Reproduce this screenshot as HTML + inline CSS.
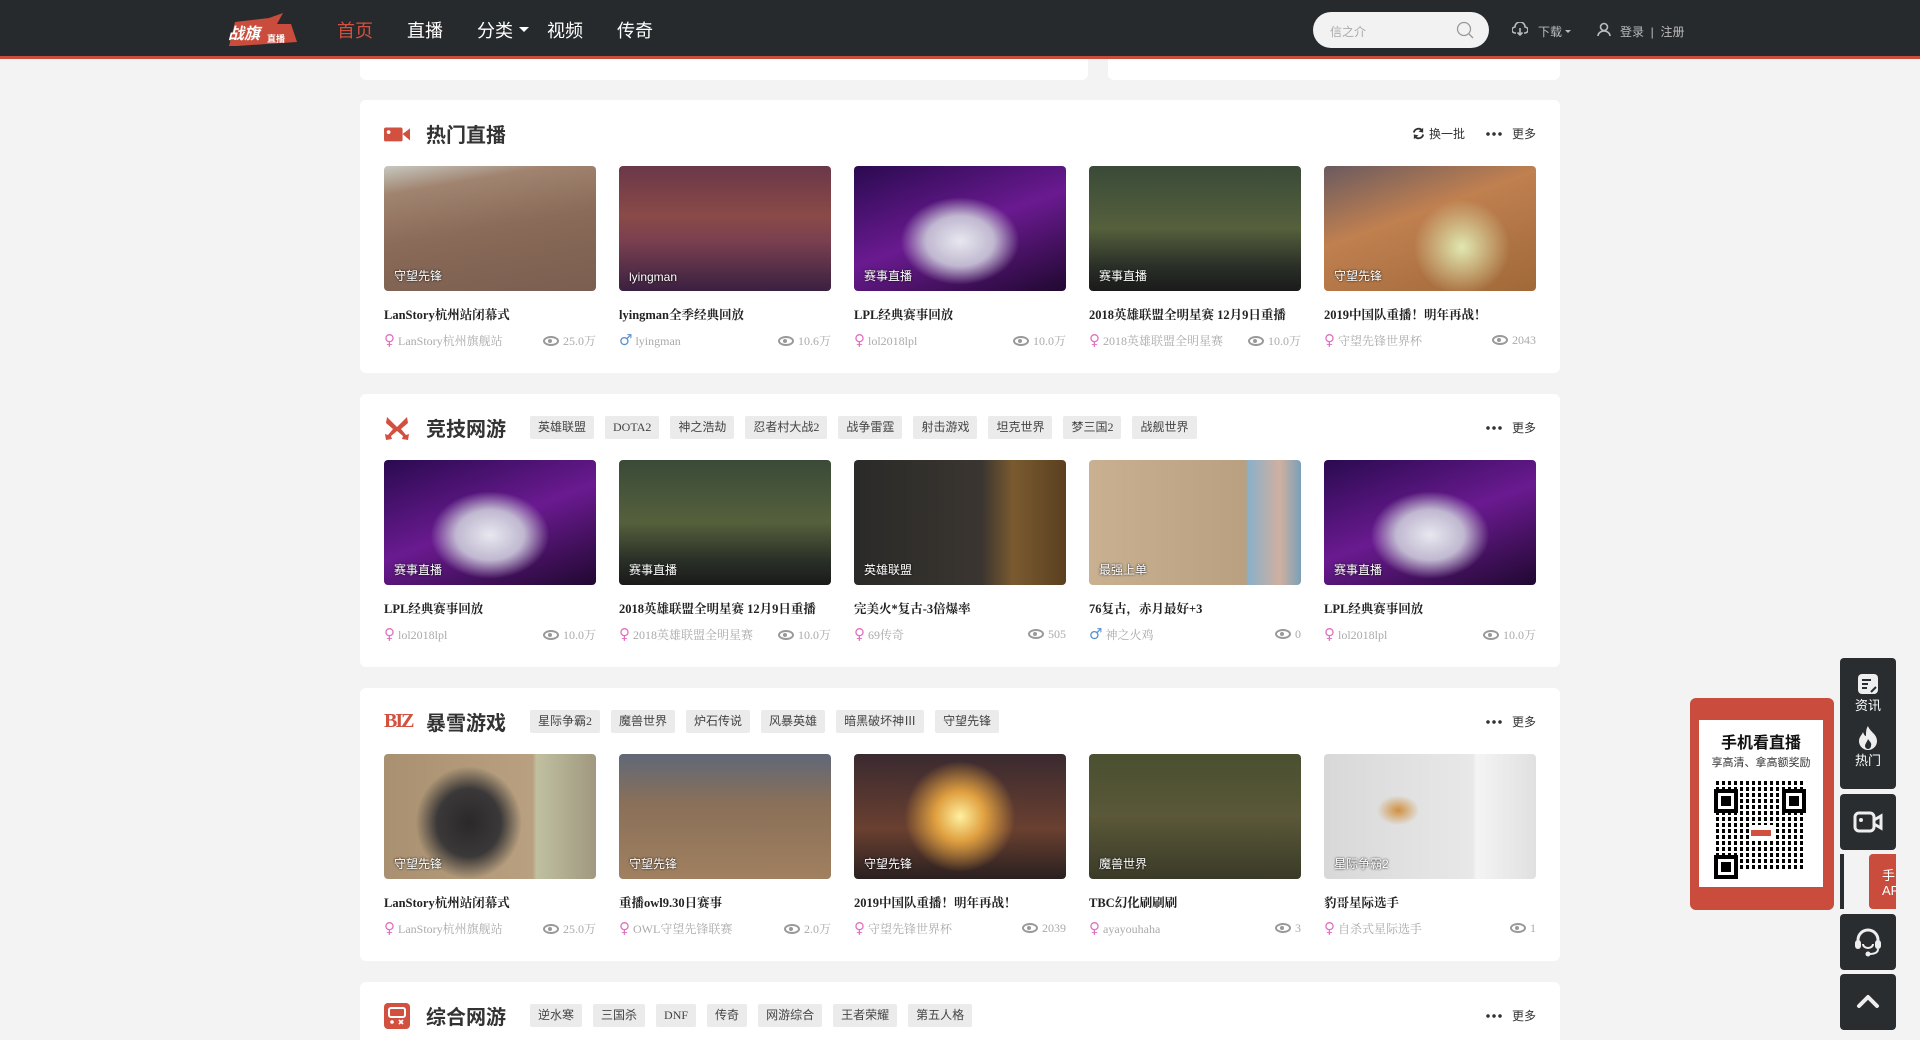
<!DOCTYPE html>
<html style="width:1920px;height:1040px;overflow:hidden"><head><meta charset="utf-8">
<style>
*{margin:0;padding:0;box-sizing:border-box}
body{width:1920px;height:1040px;overflow:hidden;background:#f3f3f3;font-family:"Liberation Sans","Noto Sans CJK SC",sans-serif;position:relative}
.hdr{position:absolute;left:0;top:0;width:1920px;height:59px;background:#272a2d;border-bottom:3px solid #c94c3d}
.nav{position:absolute;top:17px;font-size:18px;color:#fff}
.logo{position:absolute;left:225px;top:12px;width:72px;height:36px}
.search{position:absolute;left:1313px;top:12px;width:176px;height:36px;border-radius:18px;background:#f2f2f2;font-size:12px;color:#aaa;padding:11px 0 0 17px}
.hr{position:absolute;top:23px;font-size:12px;color:#bbb}
.card{position:absolute;left:360px;width:1200px;height:273px;background:#fff;border-radius:6px}
.ttl{position:absolute;left:66px;top:19px;font-size:20px;font-weight:bold;color:#333}
.ico{position:absolute;left:24px;top:21px;width:26px;height:26px}
.tags{position:absolute;left:170px;top:22px;display:flex;gap:11px}
.tag{height:23px;line-height:23px;padding:0 8px;background:#ebebeb;border-radius:2px;font-size:12px;color:#444;font-family:"Liberation Serif","Noto Sans CJK SC",serif}
.more{position:absolute;right:24px;top:25px;font-size:12px;color:#333;display:flex;align-items:center}
.dots{display:inline-block;width:18px;height:4px;margin-right:9px;background:radial-gradient(circle,#333 1.6px,transparent 2px) 0 0/6px 4px repeat-x}
.items{position:absolute;left:24px;top:66px;display:flex;gap:23px}
.it{width:212px}
.th{width:212px;height:125px;border-radius:4px;position:relative;overflow:hidden}
.th span{position:absolute;left:10px;bottom:7px;color:#fff;font-size:12px;text-shadow:0 0 2px #000}
.it h4{margin-top:14px;font-size:12.5px;font-family:"Liberation Serif","Noto Serif CJK SC",serif;color:#222;font-weight:bold;white-space:nowrap;height:16px}
.meta{margin-top:10px;display:flex;justify-content:space-between;font-size:12px;color:#aaa;font-family:"Liberation Serif","Noto Serif CJK SC",serif;align-items:center}
.f,.m{font-size:15px;font-weight:bold;font-family:"DejaVu Sans",sans-serif;margin-right:3px}
.f{color:#e070c0}.m{color:#5a90d0}
.eye{display:inline-block;width:16px;height:10px;border:2px solid #999;border-radius:50%;vertical-align:-1px;margin-right:4px;position:relative}
.eye:after{content:"";position:absolute;left:3px;top:1px;width:4px;height:4px;border-radius:50%;background:#999}
.sb{position:absolute;left:1840px;width:56px;background:#2a2d30;border-radius:4px;color:#fff;font-size:13px;text-align:center}
</style></head><body>
<div class="hdr">
 <svg class="logo" viewBox="0 0 72 36"><polygon points="4,34 10,10 44,6 58,1 52,12 66,12 72,30 12,34" fill="#c94c3d"/><text x="3" y="27" font-size="16" font-weight="bold" font-style="italic" fill="#fff" font-family="Noto Sans CJK SC">战旗</text><text x="42" y="30" font-size="9" font-weight="bold" fill="#fff" font-family="Noto Sans CJK SC">直播</text></svg>
 <div class="nav" style="left:337px;color:#d2503f">首页</div>
 <div class="nav" style="left:407px">直播</div>
 <div class="nav" style="left:477px">分类</div>
 <div style="position:absolute;left:519px;top:27px;border:5px solid transparent;border-top:5px solid #fff"></div>
 <div class="nav" style="left:547px">视频</div>
 <div class="nav" style="left:617px">传奇</div>
 <div class="search">信之介<svg style="position:absolute;left:142px;top:8px" width="20" height="20" viewBox="0 0 20 20"><circle cx="9" cy="9" r="6.5" fill="none" stroke="#999" stroke-width="1.3"/><line x1="14" y1="14" x2="18" y2="18" stroke="#999" stroke-width="1.3"/></svg></div>
 <svg style="position:absolute;left:1512px;top:22px" width="16" height="14" viewBox="0 0 16 14"><path d="M4 11H3a3 3 0 0 1 0-6 5 5 0 0 1 10 0 3 3 0 0 1 0 6h-1" fill="none" stroke="#bbb" stroke-width="1.6"/><path d="M8 6v7M5.5 10.5 8 13l2.5-2.5" fill="none" stroke="#bbb" stroke-width="1.6"/></svg>
 <div class="hr" style="left:1538px">下载</div>
 <div style="position:absolute;left:1565px;top:30px;border:3px solid transparent;border-top:3px solid #bbb"></div>
 <svg style="position:absolute;left:1597px;top:22px" width="14" height="15" viewBox="0 0 14 15"><circle cx="7" cy="5" r="3.5" fill="none" stroke="#bbb" stroke-width="1.6"/><path d="M1 14a6 5 0 0 1 12 0" fill="none" stroke="#bbb" stroke-width="1.6"/></svg>
 <div class="hr" style="left:1620px">登录 &nbsp;| &nbsp;注册</div>
</div>
<div style="position:absolute;left:360px;top:59px;width:728px;height:21px;background:#fff;border-radius:0 0 6px 6px"></div>
<div style="position:absolute;left:1108px;top:59px;width:452px;height:21px;background:#fff;border-radius:0 0 6px 6px"></div>

<div class="card" style="top:100px">
 <svg class="ico" viewBox="0 0 28 26"><rect x="0" y="6" width="20" height="15" rx="2" fill="#d2503f"/><polygon points="20,13 28,7 28,20" fill="#d2503f"/><circle cx="5" cy="11" r="2" fill="#fff"/></svg>
 <div class="ttl">热门直播</div>
 <div class="more"><svg width="13" height="13" viewBox="0 0 14 14" style="margin-right:4px"><path d="M2 6a5 5 0 0 1 9-2M12 8a5 5 0 0 1-9 2" fill="none" stroke="#333" stroke-width="2"/><polygon points="12,1 12,6 7,5" fill="#333"/><polygon points="2,13 2,8 7,9" fill="#333"/></svg>换一批<span style="width:20px"></span><span class="dots"></span>更多</div>
 <div class="items">
  <div class="it"><div class="th" style="background:linear-gradient(170deg,#c8c8c0 0%,#a08470 18%,#8a6a58 50%,#7a5e50 100%)"><span>守望先锋</span></div><h4>LanStory杭州站闭幕式</h4><div class="meta"><span><b class="f">♀</b>LanStory杭州旗舰站</span><span><i class="eye"></i>25.0万</span></div></div>
  <div class="it"><div class="th" style="background:linear-gradient(180deg,#6a3848 0%,#8a4a48 40%,#7a4050 60%,#3a2040 100%)"><span>lyingman</span></div><h4>lyingman全季经典回放</h4><div class="meta"><span><b class="m">♂</b>lyingman</span><span><i class="eye"></i>10.6万</span></div></div>
  <div class="it"><div class="th" style="background:radial-gradient(ellipse 40% 50% at 50% 60%,#e8e8f0 0%,#c0b8d0 40%,transparent 70%),linear-gradient(160deg,#2a0a50,#6a1a90 50%,#200830)"><span>赛事直播</span></div><h4>LPL经典赛事回放</h4><div class="meta"><span><b class="f">♀</b>lol2018lpl</span><span><i class="eye"></i>10.0万</span></div></div>
  <div class="it"><div class="th" style="background:linear-gradient(180deg,#3a4a38,#55603c 50%,#2a3028 80%,#1a1a1a)"><span>赛事直播</span></div><h4>2018英雄联盟全明星赛 12月9日重播</h4><div class="meta"><span><b class="f">♀</b>2018英雄联盟全明星赛</span><span><i class="eye"></i>10.0万</span></div></div>
  <div class="it"><div class="th" style="background:radial-gradient(circle at 65% 65%,#e0e8b0 0%,transparent 30%),linear-gradient(160deg,#6a5a60,#c08050 40%,#a06838 100%)"><span>守望先锋</span></div><h4>2019中国队重播！明年再战！</h4><div class="meta"><span><b class="f">♀</b>守望先锋世界杯</span><span><i class="eye"></i>2043</span></div></div>
 </div>
</div>

<div class="card" style="top:394px">
 <svg class="ico" viewBox="0 0 26 26"><path d="M3 2 13 12 23 2 24 8 17 14 22 20 25 19 24 25 18 24 19 21 13 16 7 21 8 24 2 25 1 19 4 20 9 14 2 8z" fill="#d2503f"/></svg>
 <div class="ttl">竞技网游</div>
 <div class="tags"><span class="tag">英雄联盟</span><span class="tag">DOTA2</span><span class="tag">神之浩劫</span><span class="tag">忍者村大战2</span><span class="tag">战争雷霆</span><span class="tag">射击游戏</span><span class="tag">坦克世界</span><span class="tag">梦三国2</span><span class="tag">战舰世界</span></div>
 <div class="more"><span class="dots"></span>更多</div>
 <div class="items">
  <div class="it"><div class="th" style="background:radial-gradient(ellipse 40% 50% at 50% 60%,#e8e8f0 0%,#c0b8d0 40%,transparent 70%),linear-gradient(160deg,#2a0a50,#6a1a90 50%,#200830)"><span>赛事直播</span></div><h4>LPL经典赛事回放</h4><div class="meta"><span><b class="f">♀</b>lol2018lpl</span><span><i class="eye"></i>10.0万</span></div></div>
  <div class="it"><div class="th" style="background:linear-gradient(180deg,#3a4a38,#55603c 50%,#2a3028 80%,#1a1a1a)"><span>赛事直播</span></div><h4>2018英雄联盟全明星赛 12月9日重播</h4><div class="meta"><span><b class="f">♀</b>2018英雄联盟全明星赛</span><span><i class="eye"></i>10.0万</span></div></div>
  <div class="it"><div class="th" style="background:linear-gradient(90deg,#2a2a28 0%,#3a3530 60%,#7a5a30 75%,#5a4020 100%)"><span>英雄联盟</span></div><h4>完美火*复古-3倍爆率</h4><div class="meta"><span><b class="f">♀</b>69传奇</span><span><i class="eye"></i>505</span></div></div>
  <div class="it"><div class="th" style="background:linear-gradient(90deg,#c8b090 0%,#b8a080 74%,#8ab0c8 75%,#d0b0a0 90%,#7aa0b8 100%)"><span>最强上单</span></div><h4>76复古，赤月最好+3</h4><div class="meta"><span><b class="m">♂</b>神之火鸡</span><span><i class="eye"></i>0</span></div></div>
  <div class="it"><div class="th" style="background:radial-gradient(ellipse 40% 50% at 50% 60%,#e8e8f0 0%,#c0b8d0 40%,transparent 70%),linear-gradient(160deg,#2a0a50,#6a1a90 50%,#200830)"><span>赛事直播</span></div><h4>LPL经典赛事回放</h4><div class="meta"><span><b class="f">♀</b>lol2018lpl</span><span><i class="eye"></i>10.0万</span></div></div>
 </div>
</div>

<div class="card" style="top:688px">
 <div class="ico" style="color:#d2503f;font-weight:bold;font-size:20px;font-family:'Liberation Serif',serif;letter-spacing:-2px;top:22px">BIZ</div>
 <div class="ttl">暴雪游戏</div>
 <div class="tags"><span class="tag">星际争霸2</span><span class="tag">魔兽世界</span><span class="tag">炉石传说</span><span class="tag">风暴英雄</span><span class="tag">暗黑破坏神Ⅲ</span><span class="tag">守望先锋</span></div>
 <div class="more"><span class="dots"></span>更多</div>
 <div class="items">
  <div class="it"><div class="th" style="background:radial-gradient(ellipse 25% 45% at 40% 55%,#2a2828 0%,#3a3838 60%,transparent 100%),linear-gradient(90deg,#a89070 0%,#b8a080 70%,#c0c0a0 72%,#a09880 100%)"><span>守望先锋</span></div><h4>LanStory杭州站闭幕式</h4><div class="meta"><span><b class="f">♀</b>LanStory杭州旗舰站</span><span><i class="eye"></i>25.0万</span></div></div>
  <div class="it"><div class="th" style="background:linear-gradient(180deg,#606878 0%,#8a7058 40%,#a08060 100%)"><span>守望先锋</span></div><h4>重播owl9.30日赛事</h4><div class="meta"><span><b class="f">♀</b>OWL守望先锋联赛</span><span><i class="eye"></i>2.0万</span></div></div>
  <div class="it"><div class="th" style="background:radial-gradient(circle at 50% 50%,#fff0a0 0%,#e0a040 20%,transparent 45%),linear-gradient(180deg,#3a2a30,#6a4030 60%,#2a2020)"><span>守望先锋</span></div><h4>2019中国队重播！明年再战！</h4><div class="meta"><span><b class="f">♀</b>守望先锋世界杯</span><span><i class="eye"></i>2039</span></div></div>
  <div class="it"><div class="th" style="background:linear-gradient(180deg,#4a5030,#5a5838 50%,#3a3a28)"><span>魔兽世界</span></div><h4>TBC幻化刷刷刷</h4><div class="meta"><span><b class="f">♀</b>ayayouhaha</span><span><i class="eye"></i>3</span></div></div>
  <div class="it"><div class="th" style="background:radial-gradient(ellipse 10% 12% at 35% 45%,#d09040 0%,transparent 100%),linear-gradient(90deg,#d8d8d8 0%,#e8e8e8 70%,#f4f4f4 72%,#e0e0e0 100%)"><span>星际争霸2</span></div><h4>豹哥星际选手</h4><div class="meta"><span><b class="f">♀</b>自杀式星际选手</span><span><i class="eye"></i>1</span></div></div>
 </div>
</div>

<div class="card" style="top:982px;height:58px;border-radius:6px 6px 0 0">
 <svg class="ico" viewBox="0 0 26 26"><rect x="0" y="0" width="26" height="26" rx="4" fill="#d2503f"/><rect x="5" y="5" width="16" height="9" rx="2" fill="none" stroke="#fff" stroke-width="2"/><circle cx="8" cy="19" r="1.8" fill="#fff"/><path d="M15 17l4 4M19 17l-4 4" stroke="#fff" stroke-width="1.6"/></svg>
 <div class="ttl">综合网游</div>
 <div class="tags"><span class="tag">逆水寒</span><span class="tag">三国杀</span><span class="tag">DNF</span><span class="tag">传奇</span><span class="tag">网游综合</span><span class="tag">王者荣耀</span><span class="tag">第五人格</span></div>
 <div class="more"><span class="dots"></span>更多</div>
</div>

<div style="position:absolute;left:1690px;top:698px;width:144px;height:212px;background:#c94c3d;border-radius:6px">
 <div style="position:absolute;left:9px;top:22px;width:124px;height:167px;background:#fff;text-align:center">
  <div style="font-size:16px;font-weight:bold;color:#111;margin-top:9px">手机看直播</div>
  <div style="font-size:11px;color:#333;margin-top:1px">享高清、拿高额奖励</div>
  <div style="margin:9px auto 0;width:90px;height:90px;background:repeating-linear-gradient(90deg,#000 0 3px,#fff 3px 6px),#000;position:relative;-webkit-mask:repeating-linear-gradient(0deg,#000 0 4px,transparent 4px 6px)"></div>
  <div style="position:absolute;left:15px;top:69px;width:24px;height:24px;border:4px solid #000;background:#fff;box-shadow:inset 0 0 0 3px #fff,inset 0 0 0 8px #000"></div>
  <div style="position:absolute;left:83px;top:69px;width:24px;height:24px;border:4px solid #000;background:#fff;box-shadow:inset 0 0 0 3px #fff,inset 0 0 0 8px #000"></div>
  <div style="position:absolute;left:15px;top:135px;width:24px;height:24px;border:4px solid #000;background:#fff;box-shadow:inset 0 0 0 3px #fff,inset 0 0 0 8px #000"></div>
  <div style="position:absolute;left:50px;top:105px;width:24px;height:16px;background:#fff"><div style="margin:5px 2px;height:6px;background:#d2503f"></div></div>
 </div>
</div>

<div class="sb" style="top:658px;height:131px">
 <svg style="margin-top:16px" width="20" height="20" viewBox="0 0 20 20"><rect x="0" y="0" width="20" height="20" rx="4" fill="#eee"/><path d="M4 6h9M4 10h6M4 14h5" stroke="#2a2d30" stroke-width="2"/><path d="M13 18l5-5" stroke="#2a2d30" stroke-width="2"/></svg>
 <div style="margin-top:-2px">资讯</div>
 <svg style="margin-top:12px" width="22" height="24" viewBox="0 0 22 24"><path d="M11 0c2 6 9 8 9 15a9 9 0 0 1-18 0c0-4 3-6 4-9 1 3 2 4 3 4 0-4 0-7 2-10z" fill="#eee"/><path d="M11 13c2 3 4 4 3 7a3 3 0 0 1-6 0c0-2 2-4 3-7z" fill="#2a2d30"/></svg>
 <div style="margin-top:-3px">热门</div>
</div>
<div class="sb" style="top:794px;height:56px"><svg style="margin-top:16px" width="30" height="24" viewBox="0 0 30 24"><rect x="2" y="3" width="19" height="18" rx="4" fill="none" stroke="#eee" stroke-width="3"/><circle cx="8" cy="10" r="2" fill="#eee"/><path d="M21 10l7-4v12l-7-4" fill="none" stroke="#eee" stroke-width="3"/></svg></div>
<div style="position:absolute;left:1840px;top:854px;width:4px;height:55px;background:#2a2d30"></div>
<div style="position:absolute;left:1869px;top:854px;width:27px;height:55px;background:#c94c3d;border-radius:4px 0 0 4px;color:#fff;font-size:13px;padding:14px 0 0 13px;line-height:15px;overflow:hidden;white-space:nowrap">手<br>AP</div>
<div class="sb" style="top:914px;height:56px"><svg style="margin-top:13px" width="30" height="30" viewBox="0 0 30 30"><path d="M5 17v-4a10 10 0 0 1 20 0v4" fill="none" stroke="#eee" stroke-width="3"/><rect x="2" y="13" width="6" height="9" rx="3" fill="#eee"/><rect x="22" y="13" width="6" height="9" rx="3" fill="#eee"/><path d="M10 17a5 4 0 0 0 10 0" fill="none" stroke="#eee" stroke-width="2"/><path d="M25 22c0 4-4 5-9 5" fill="none" stroke="#eee" stroke-width="2"/><circle cx="15" cy="27" r="2.5" fill="#eee"/></svg></div>
<div class="sb" style="top:974px;height:56px"><svg style="margin-top:19px" width="24" height="16" viewBox="0 0 24 16"><path d="M3 13 12 4l9 9" fill="none" stroke="#eee" stroke-width="4" stroke-linecap="round" stroke-linejoin="round"/></svg></div>
</body></html>
